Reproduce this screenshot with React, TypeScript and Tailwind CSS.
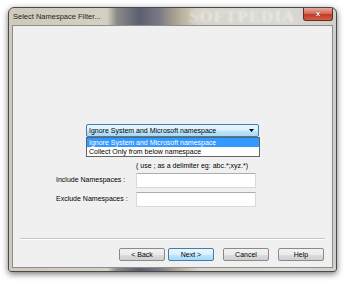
import React from 'react';

const font = { fontFamily: '"Liberation Sans", Arial, sans-serif' };

function AeroButton({ label, primary, className }: { label: string; primary?: boolean; className?: string }) {
    const base = 'w-[46px] h-[13px] rounded-[2px] border text-[7px] leading-none text-black flex items-center justify-center ';
    return (
        <button
            className={
                base +
                (primary
                    ? 'border-[#3c7fb1] bg-[linear-gradient(#eaf6fd_0%,#d9f0fc_50%,#bee6fd_51%,#a7d9f5_100%)] '
                    : 'border-[#8a8a8a] bg-[linear-gradient(#f2f2f2_0%,#ebebeb_50%,#dddddd_51%,#cfcfcf_100%)] ') +
                (className ?? '')
            }
        >
            {label}
        </button>
    );
}

export default function App() {
    return (
        <div className="w-[350px] h-[285px] bg-white overflow-hidden" style={font}>
            {/* Window frame */}
            <div className="ml-[8px] mt-[7px] w-[329px] h-[265px] flex flex-col rounded-t-[6px] rounded-b-[3px] border border-[#4a4a4a] bg-[linear-gradient(90deg,#cfcabb_0%,#d4d0c2_30%,#8c8a86_33%,#5d5f72_40%,#7a7a86_46%,#b3ab94_52%,#d6d4ca_58%,#d9d8d2_85%,#cfcfcb_100%)] shadow-[0_2px_6px_rgba(0,0,0,0.55)]">
                {/* Title bar */}
                <div className="relative h-[17px] flex items-center pl-[4px]">
                    <span className="text-[7.5px] text-[#1e1e1e]">Select Namespace Filter...</span>
                    <span className="absolute left-[180px] top-[0px] text-[17px] font-bold tracking-[1px] text-white/45 blur-[0.8px] leading-none" style={{ fontFamily: '"Liberation Serif", serif' }}>
                        SOFTPEDIA
                    </span>
                    {/* Close button */}
                    <div className="absolute right-[3px] top-[0px] w-[30px] h-[13px] rounded-b-[3px] border border-t-0 border-[#6b2a20] bg-[linear-gradient(#e9a99b_0%,#d56d5b_45%,#c13a26_55%,#d2604a_100%)] flex items-center justify-center">
                        <span className="text-[8px] font-bold leading-none text-white [text-shadow:0_0_1px_#5a1a10]">x</span>
                    </div>
                </div>

                {/* Client area */}
                <div className="mx-[3px] mb-[3px] flex-1 flex flex-col border border-[#8d8d8d] bg-[#f0f0f0] pt-[98px] pb-[6px]">
                    {/* Combo */}
                    <div className="pl-[73px]">
                        <div className="relative w-[173px] h-[13px] border border-[#3c7fb1] rounded-[2px] bg-[linear-gradient(#eaf6fd_0%,#d9f0fc_50%,#bee6fd_51%,#a7d9f5_100%)] flex items-center pl-[2px]">
                            <span className="text-[7px] leading-none text-black">Ignore System and Microsoft namespace</span>
                            <svg className="absolute right-[4px] top-[4px]" width="5" height="3" viewBox="0 0 5 3">
                                <path d="M0 0 L5 0 L2.5 3 Z" fill="#000" />
                            </svg>
                            {/* Open list */}
                            <div className="absolute left-[-1px] top-[12px] w-[174px] border border-[#646464] bg-white flex flex-col z-10">
                                <div className="h-[9px] bg-[#3399ff] text-white text-[7px] leading-[9px] pl-[2px]">Ignore System and Microsoft namespace</div>
                                <div className="h-[9px] text-black text-[7px] leading-[9px] pl-[2px]">Collect Only from below namespace</div>
                            </div>
                        </div>
                    </div>

                    {/* Hint */}
                    <div className="mt-[24px] pl-[123px] h-[9px] text-[7px] leading-[9px] text-black">
                        ( use ; as a delimiter eg: abc.*;xyz.*)
                    </div>

                    {/* Fields */}
                    <div className="mt-[3px] pl-[43px] flex flex-col gap-[4px]">
                        <div className="flex items-center">
                            <span className="w-[80px] text-[7px] text-black">Include Namespaces :</span>
                            <div className="w-[120px] h-[15px] bg-white border border-[#d5dae0] border-t-[#abadb3]" />
                        </div>
                        <div className="flex items-center">
                            <span className="w-[80px] text-[7px] text-black">Exclude Namespaces :</span>
                            <div className="w-[120px] h-[15px] bg-white border border-[#d5dae0] border-t-[#abadb3]" />
                        </div>
                    </div>

                    {/* Separator */}
                    <div className="mt-auto mx-[7px] h-[2px] border-t border-[#c6c6c6] border-b border-b-white" />

                    {/* Buttons */}
                    <div className="mt-[8px] flex items-start pl-[106px]">
                        <AeroButton label="< Back" />
                        <AeroButton label="Next >" primary className="ml-[3px]" />
                        <AeroButton label="Cancel" className="ml-[9px]" />
                        <AeroButton label="Help" className="ml-[9px]" />
                    </div>
                </div>
            </div>
        </div>
    );
}
